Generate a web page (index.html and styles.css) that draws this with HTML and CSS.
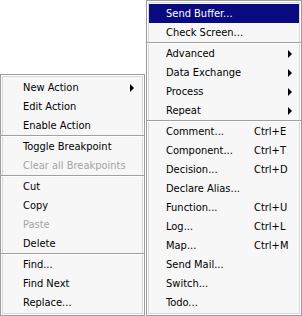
FILE: index.html
```html
<!DOCTYPE html>
<html lang="en">
<head>
  <meta charset="UTF-8">
  <title>Context Menus</title>
  <link rel="stylesheet" href="styles.css">
</head>
<body>
  <div class="menus">
    <ul class="menu menu-left">
      <li class="item sub"><span class="label">New Action</span><span class="arrow"></span></li>
      <li class="item"><span class="label">Edit Action</span></li>
      <li class="item"><span class="label">Enable Action</span></li>
      <li class="sep"></li>
      <li class="item"><span class="label">Toggle Breakpoint</span></li>
      <li class="item off"><span class="label">Clear all Breakpoints</span></li>
      <li class="sep"></li>
      <li class="item"><span class="label">Cut</span></li>
      <li class="item"><span class="label">Copy</span></li>
      <li class="item off"><span class="label">Paste</span></li>
      <li class="item"><span class="label">Delete</span></li>
      <li class="sep"></li>
      <li class="item"><span class="label">Find...</span></li>
      <li class="item"><span class="label">Find Next</span></li>
      <li class="item"><span class="label">Replace...</span></li>
    </ul>

    <ul class="menu menu-right">
      <li class="item active"><span class="label">Send Buffer...</span></li>
      <li class="item"><span class="label">Check Screen...</span></li>
      <li class="sep"></li>
      <li class="item sub"><span class="label">Advanced</span><span class="arrow"></span></li>
      <li class="item sub"><span class="label">Data Exchange</span><span class="arrow"></span></li>
      <li class="item sub"><span class="label">Process</span><span class="arrow"></span></li>
      <li class="item sub"><span class="label">Repeat</span><span class="arrow"></span></li>
      <li class="sep"></li>
      <li class="item"><span class="label">Comment...</span><span class="key">Ctrl+E</span></li>
      <li class="item"><span class="label">Component...</span><span class="key">Ctrl+T</span></li>
      <li class="item"><span class="label">Decision...</span><span class="key">Ctrl+D</span></li>
      <li class="item"><span class="label">Declare Alias...</span></li>
      <li class="item"><span class="label">Function...</span><span class="key">Ctrl+U</span></li>
      <li class="item"><span class="label">Log...</span><span class="key">Ctrl+L</span></li>
      <li class="item"><span class="label">Map...</span><span class="key">Ctrl+M</span></li>
      <li class="item"><span class="label">Send Mail...</span></li>
      <li class="item"><span class="label">Switch...</span></li>
      <li class="item"><span class="label">Todo...</span></li>
    </ul>
  </div>
</body>
</html>
```

FILE: styles.css
```css
body {
  margin: 0;
  background: #fff;
  font-family: "DejaVu Sans Condensed", "DejaVu Sans", sans-serif;
  font-size: 11px;
  color: #000;
}

.menus {
  display: flex;
  align-items: flex-end;
  gap: 1px;
  height: 316px;
}

.menu {
  list-style: none;
  margin: 0;
  padding: 1px 0;
  background: #f7f7f7;
  border: 1px solid #9c9c9c;
  box-shadow: inset 1px 1px 0 #fff, inset -1px -1px 0 #fff, inset 2px 2px 0 #d8d8d8, inset -2px -2px 0 #d8d8d8;
  padding: 3px 2px;
  box-sizing: border-box;
}

.menu-left {
  width: 145px;
  height: 242px;
}

.menu-right {
  width: 156px;
  height: 316px;
}

.item {
  display: flex;
  align-items: center;
  height: 19px;
  line-height: 19px;
  white-space: nowrap;
}

.menu-left .item {
  padding: 0 8px 0 20px;
}

.menu-right .item {
  padding: 0 7px 0 17px;
}

.menu-right .label {
  width: 88px;
}

.item .label {
  flex: 1;
}

.menu-right .item .label {
  flex: none;
}

.key {
  flex: 1;
}

.arrow {
  width: 0;
  height: 0;
  border-top: 4px solid transparent;
  border-bottom: 4px solid transparent;
  border-left: 4px solid #000;
  margin-left: auto;
}

.item.active {
  background: #0a0a80;
  color: #fff;
}

.item.off {
  color: #a4a4a4;
}

.sep {
  height: 1px;
  background: #a0a0a0;
  border-bottom: 1px solid #fff;
  margin: 0 -2px;
}
```
